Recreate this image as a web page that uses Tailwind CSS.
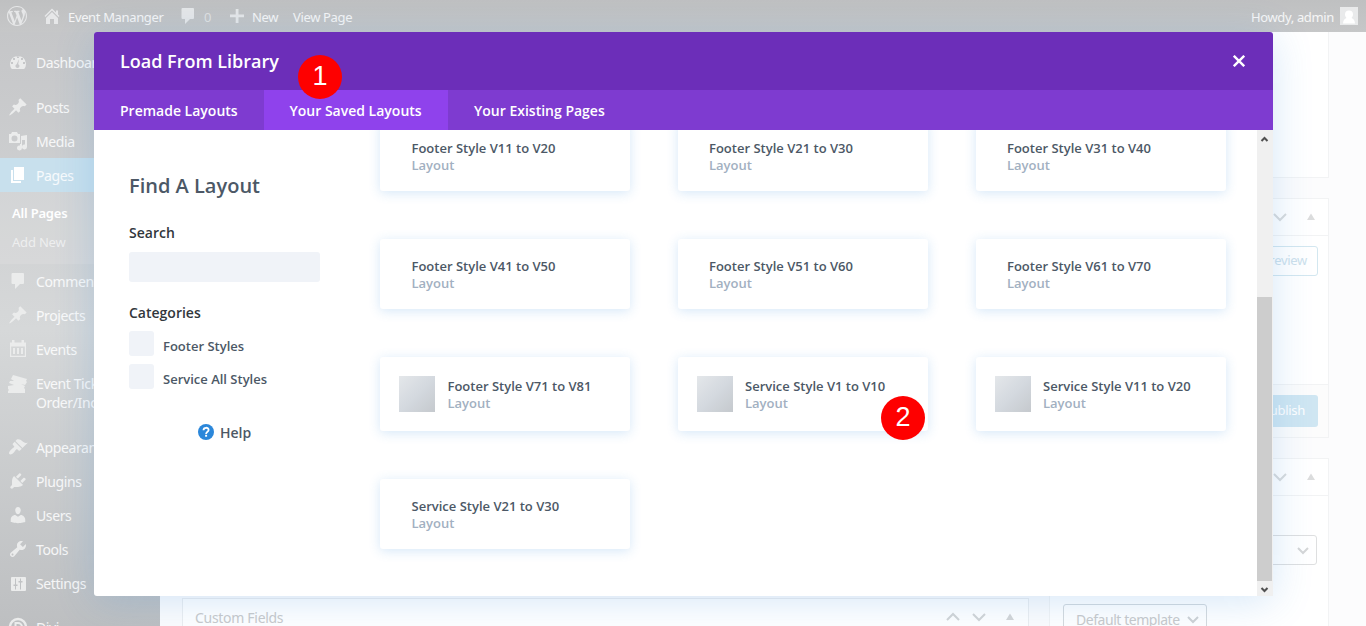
<!DOCTYPE html>
<html lang="en">
<head>
<meta charset="utf-8">
<title>Edit Page</title>
<script src="https://cdn.jsdelivr.net/npm/@tailwindcss/browser@4"></script>
</head>
<body class="relative h-[626px] w-[1366px] overflow-hidden bg-[#fcfcfd] font-['Noto_Sans',sans-serif]">

<!-- Admin bar -->
<header class="flex h-8 items-center bg-linear-to-b from-[#bfc0c1] to-[#c6c7c8] text-[13px] tracking-[-0.35px] whitespace-nowrap text-white/85 [&>span]:pt-[3px]">
  <svg class="ml-[7px] size-5 fill-[#e6e7e8]" viewBox="0 0 20 20"><path d="M20 10c0-5.51-4.49-10-10-10C4.480 0 0 4.490 0 10c0 5.520 4.480 10 10 10 5.510 0 10-4.480 10-10zM7.780 15.370L4.370 6.220c.55-.02 1.170-.08 1.170-.08.5-.06.44-1.130-.06-1.110 0 0-1.450.11-2.370.11-.18 0-.37 0-.58-.01C4.120 2.690 6.870 1.110 10 1.110c2.330 0 4.450.87 6.050 2.340-.68-.11-1.650.39-1.650 1.580 0 .74.45 1.360.9 2.100.35.61.55 1.360.55 2.460 0 1.490-1.400 5-1.400 5l-3.030-8.370c.54-.02.82-.17.82-.17.5-.05.44-1.250-.06-1.220 0 0-1.440.12-2.380.12-.87 0-2.330-.12-2.330-.12-.5-.03-.56 1.200-.06 1.220l.92.08 1.260 3.410zM17.410 10c.24-.64.74-1.870.43-4.250.7 1.290 1.050 2.710 1.050 4.250 0 3.290-1.730 6.240-4.400 7.780.97-2.590 1.940-5.200 2.920-7.780zM6.100 18.090C3.120 16.650 1.110 13.530 1.110 10c0-1.300.23-2.480.72-3.590C3.250 10.300 4.670 14.200 6.100 18.090zm4.030-6.630l2.580 6.980c-.86.29-1.760.45-2.710.45-.79 0-1.570-.11-2.290-.33.81-2.380 1.620-4.740 2.420-7.100z"/></svg>
  <svg class="ml-[15px] size-5 fill-[#e6e7e8]" viewBox="0 0 20 20"><path d="M16 8.500l1.530 1.530-1.060 1.060L10 4.600l-6.470 6.490-1.060-1.060L10 2.500l4 4v-2h2v4zm-6-2.460l6 5.990V18H12v-5H8v5H4v-5.970z"/></svg>
  <span class="ml-[6px] w-[95px]">Event Mananger</span>
  <svg class="ml-[15px] size-5 fill-[#e6e7e8]" viewBox="0 0 20 20"><path d="M4.500 2h10.500q1 0 1 1v9q0 1-1 1h-3l-5 5v-5H4.500q-1 0-1-1V3q0-1 1-1z"/></svg>
  <span class="ml-[6px] w-[8px] text-white/50">0</span>
  <svg class="ml-[15px] size-5 fill-[#e6e7e8]" viewBox="0 0 20 20"><path d="M17 8.500v2.700h-5.500V17H8.700v-5.800H3V8.500h5.700V3h2.800v5.500z"/></svg>
  <span class="ml-[5px] w-[26px]">New</span>
  <span class="ml-[15px]">View Page</span>
  <span class="ml-auto">Howdy, admin</span>
  <svg class="mr-2 ml-[6px] size-[18px]" viewBox="0 0 18 18"><path fill="#e9eaeb" d="M0 0h18v18H0z"/><path fill="#fff" d="M9 3.500a4 4 0 0 1 4 4c0 1.500-.8 2.800-1.500 3.500 2 .7 3.200 2 3.500 5.500H3c.3-3.500 1.500-4.800 3.500-5.500C5.800 10.300 5 9 5 7.500a4 4 0 0 1 4-4z"/></svg>
</header>

<div class="flex h-[594px]">
  <!-- Admin menu -->
  <nav class="flex h-[594px] w-40 shrink-0 flex-col overflow-hidden bg-linear-to-b from-[#c5c6c8] via-[#d6d8d9] via-50% to-[#bdbfc1] pt-[13px] text-[14px] leading-[19px] tracking-[-0.4px] text-white/85 [&>*]:shrink-0">
    <div class="flex h-[34px] items-center gap-2 pl-2"><svg class="size-5 fill-[#ebecec]" viewBox="0 0 20 20"><path fill-rule="evenodd" d="M3.800 17h12.400A8 8 0 1 0 3.800 17zM9 4h2v2H9zM5 6h2v2H5zm8 0h2v2h-2zM3 10h2v2H3zm12 0h2v2h-2zM11 7l-.8 5.200a2 2 0 1 1-1.500 0z"/></svg>Dashboard</div>
    <div class="mt-[11px] flex h-[34px] items-center gap-2 pl-2"><svg class="size-5 fill-[#ebecec]" viewBox="0 0 20 20"><path d="M10.440 3.020l1.820-1.820 6.360 6.350-1.830 1.820c-1.050-.68-2.480-.57-3.410.36l-.75.75c-.92.930-1.040 2.350-.35 3.410l-1.830 1.820-2.410-2.410-2.800 2.790c-.42.420-3.380 2.710-3.800 2.290s1.860-3.390 2.280-3.810l2.790-2.790L4.100 9.360l1.830-1.820c1.050.69 2.480.57 3.400-.36l.75-.75c.93-.92 1.050-2.350.36-3.410z"/></svg>Posts</div>
    <div class="flex h-[34px] items-center gap-2 pl-2"><svg class="size-5 fill-[#ebecec]" viewBox="0 0 20 20"><path fill-rule="evenodd" d="M1 3h2l1-2h5l1 2h2v9H1zm5.500 1.500a3 3 0 1 0 0 6 3 3 0 0 0 0-6zM13 5l6-1v12a2.500 2.500 0 1 1-2-2.500V9h-3v8a2.500 2.500 0 1 1-2-2.500V13h1z"/></svg>Media</div>
    <div class="flex h-[34px] items-center gap-2 bg-[#c8e0ed] pl-2"><svg class="size-5 fill-white" viewBox="0 0 20 20"><path d="M6 15V2h10v13zm-1 1h8v2H3V5h2z"/></svg>Pages</div>
    <div class="flex h-[72px] flex-col bg-white/10 py-[7px] pl-3 text-[13px] tracking-[-0.2px]">
      <span class="h-[29px] leading-[29px] font-semibold text-white">All Pages</span>
      <span class="h-[29px] leading-[29px] text-white/60">Add New</span>
    </div>
    <div class="flex h-[34px] items-center gap-2 pl-2"><svg class="size-5 fill-[#ebecec]" viewBox="0 0 20 20"><path d="M4.500 2h10.500q1 0 1 1v9q0 1-1 1h-3l-5 5v-5H4.500q-1 0-1-1V3q0-1 1-1z"/></svg>Comments</div>
    <div class="flex h-[34px] items-center gap-2 pl-2"><svg class="size-5 fill-[#ebecec]" viewBox="0 0 20 20"><path d="M10.440 3.020l1.820-1.820 6.360 6.350-1.830 1.820c-1.050-.68-2.480-.57-3.410.36l-.75.75c-.92.930-1.040 2.350-.35 3.410l-1.830 1.820-2.410-2.410-2.800 2.790c-.42.420-3.380 2.710-3.800 2.290s1.860-3.390 2.280-3.810l2.790-2.790L4.100 9.360l1.830-1.820c1.050.69 2.480.57 3.400-.36l.75-.75c.93-.92 1.050-2.350.36-3.410z"/></svg>Projects</div>
    <div class="flex h-[34px] items-center gap-2 pl-2"><svg class="size-5 fill-[#ebecec]" viewBox="0 0 20 20"><path fill-rule="evenodd" d="M2 3.500h2V1h2.500v2.500h7V1H16v2.500h2V18H2zM3.200 7.500v9.300h13.600V7.500zM5 9h2v6H5zm4 0h2v6H9zm4 0h2v6h-2z"/></svg>Events</div>
    <div class="flex h-[53px] items-start gap-2 pt-2 pl-2"><svg class="size-5 shrink-0 fill-[#ebecec]" viewBox="0 0 20 20"><path d="M5 1l14 4-1 2 1 1-2 3-4-1 4 2-1 2 1 1v4H0v-2l1-1-1-1v-3l6-1-5-2 1-2 4 0-3-2z"/></svg><span class="whitespace-nowrap">Event Tickets<br>Order/Include</span></div>
    <div class="mt-[11px] flex h-[34px] items-center gap-2 pl-2"><svg class="size-5 fill-[#ebecec]" viewBox="0 0 20 20"><path d="M14.480 11.060L7.410 3.990l1.500-1.500c.5-.56 2.300-.47 3.510.32 1.210.8 1.430 1.280 2.910 2.100 1.180.64 2.450 1.260 4.450.85zm-.71.710L6.700 4.700 4.930 6.470c-.39.39-.39 1.020 0 1.410l1.060 1.060c.39.39.39 1.030 0 1.420-.6.600-1.430 1.110-2.210 1.690-.35.260-.7.530-1.010.84C1.430 14.230.4 16.080 1.400 17.070c.99 1 2.840-.03 4.180-1.360.31-.31.58-.66.850-1.020.57-.78 1.080-1.610 1.690-2.210.39-.39 1.020-.39 1.410 0l1.060 1.060c.39.39 1.020.39 1.410 0z"/></svg>Appearance</div>
    <div class="flex h-[34px] items-center gap-2 pl-2"><svg class="size-5 fill-[#ebecec]" viewBox="0 0 20 20"><path d="M13.110 4.360L9.870 7.600 8 5.730l3.240-3.240c.35-.34 1.050-.2 1.560.32.520.51.660 1.210.310 1.550zm-8 1.770l.91-1.120 9.010 9.010-1.190.84c-.71.710-2.630 1.160-3.820 1.160H6.140L4.900 17.260c-.59.59-1.540.59-2.120 0-.59-.58-.59-1.530 0-2.120l1.240-1.240v-3.880c0-1.130.4-3.190 1.090-3.890zm7.260 3.970l3.240-3.240c.34-.35 1.040-.21 1.550.31.520.51.660 1.210.31 1.550l-3.240 3.250z"/></svg>Plugins</div>
    <div class="flex h-[34px] items-center gap-2 pl-2"><svg class="size-5 fill-[#ebecec]" viewBox="0 0 20 20"><path d="M10 9.250c-2.270 0-2.730-3.440-2.730-3.440C7 4.020 7.820 2 9.970 2c2.160 0 2.980 2.020 2.710 3.810 0 0-.41 3.440-2.680 3.440zm0 2.570L12.720 10c2.390 0 4.520 2.330 4.520 4.530v2.490s-3.650 1.130-7.240 1.130c-3.650 0-7.240-1.130-7.240-1.130v-2.490c0-2.250 1.940-4.480 4.470-4.480z"/></svg>Users</div>
    <div class="flex h-[34px] items-center gap-2 pl-2"><svg class="size-5 fill-[#ebecec]" viewBox="0 0 20 20"><path d="M16.680 9.770c-1.340 1.340-3.300 1.670-4.950.99l-5.410 6.520c-.99.990-2.590.990-3.580 0s-.99-2.590 0-3.570l6.520-5.420c-.68-1.650-.35-3.610.99-4.950 1.280-1.280 3.120-1.620 4.720-1.060l-2.890 2.890 2.820 2.820 2.860-2.870c.53 1.580.180 3.390-1.080 4.650zM3.810 16.210c.4.390 1.040.39 1.430 0 .4-.4.400-1.040 0-1.430-.39-.4-1.030-.4-1.430 0-.39.39-.39 1.030 0 1.430z"/></svg>Tools</div>
    <div class="flex h-[35px] items-center gap-2 pl-2"><svg class="size-5 fill-[#ebecec]" viewBox="0 0 20 20"><path fill-rule="evenodd" d="M18 16V4q0-1-1-1H4Q3 3 3 4v12q0 1 1 1h13q1 0 1-1zM8 10.500h1.500V12H8v3.500H7V12H5.500v-1.500H7V4.500h1zM13 7h1.500v1.500H13v7h-1v-7h-1.500V7H12V4.500h1z"/></svg>Settings</div>
    <div class="mt-[9px] flex h-[34px] items-center gap-2 pl-2"><svg class="size-5" viewBox="0 0 20 20"><circle cx="10" cy="10" r="8" fill="none" stroke="#ebecec" stroke-width="2.400"/><path fill="none" stroke="#ebecec" stroke-width="2" d="M7.500 6v8H10a4 4 0 0 0 0-8z"/></svg>Divi</div>
  </nav>

  <!-- Editor behind the dialog -->
  <main class="flex h-[594px] min-w-0 grow gap-5 overflow-hidden pl-[22px] tracking-[-0.3px] text-[#c9cacb]">
    <section class="flex w-[847px] flex-col [&>*]:shrink-0">
      <div class="mt-[566px] flex h-[38px] items-center border border-[#eceef0] bg-white pr-[11px] pl-3 text-[14px]">
        <span class="grow">Custom Fields</span>
        <svg class="h-5 w-[76px]" viewBox="0 0 76 20" fill="none" stroke="#d3d5d6" stroke-width="2"><path d="M6 13l6-6 6 6M32 7l6 6 6-6"/><path fill="#d5d6d7" stroke="none" d="M65 13l4-6.500 4 6.500z"/></svg>
      </div>
    </section>
    <aside class="flex w-[280px] flex-col [&>*]:shrink-0">
      <div class="h-[146px] border border-t-0 border-[#f2f3f4] bg-white"></div>
      <div class="mt-5 flex h-[240px] flex-col border border-[#f2f3f4] bg-white">
        <div class="flex h-[37px] shrink-0 items-center justify-end border-b border-[#f2f3f4] pr-[10px]">
          <svg class="h-5 w-[50px]" viewBox="0 0 50 20" fill="none" stroke="#d9dbdc" stroke-width="2"><path d="M6 7l6 6 6-6"/><path fill="#dcdddd" stroke="none" d="M39 13l4-6.500 4 6.500z"/></svg>
        </div>
        <div class="mt-[10px] mr-[10px] flex h-[30px] w-[82px] shrink-0 items-center justify-end self-end rounded-[3px] border border-[#d3e7f0] pr-[10px] text-[13px] text-[#cde1ec]">Preview</div>
        <div class="mt-auto flex h-[53px] shrink-0 items-center justify-end border-t border-[#f2f3f4] bg-[#fcfcfc] pr-[10px]"><span class="flex h-8 w-[76px] items-center justify-end rounded-[3px] bg-[#cfe6f2] pr-[13px] text-[13px] text-white">Publish</span></div>
      </div>
      <div class="mt-5 flex h-[200px] flex-col border border-[#f2f3f4] bg-white">
        <div class="flex h-[37px] shrink-0 items-center justify-end border-b border-[#f2f3f4] pr-[10px]">
          <svg class="h-5 w-[50px]" viewBox="0 0 50 20" fill="none" stroke="#d9dbdc" stroke-width="2"><path d="M6 7l6 6 6-6"/><path fill="#dcdddd" stroke="none" d="M39 13l4-6.500 4 6.500z"/></svg>
        </div>
        <div class="mt-[39px] mr-[11px] flex h-[30px] w-[240px] shrink-0 items-center justify-end self-end rounded-[3px] border border-[#dedfe0] pr-[7px]"><svg class="size-3" viewBox="0 0 12 12" fill="none" stroke="#d5d6d7" stroke-width="2"><path d="M1 4l5 5 5-5"/></svg></div>
        <div class="mt-[39px] ml-[13px] flex h-[30px] w-[144px] shrink-0 items-center justify-between rounded-[3px] border border-[#d5dadd] pr-[7px] pl-3 text-[14px] tracking-[-0.45px]"><span class="whitespace-nowrap">Default template</span><svg class="size-3" viewBox="0 0 12 12" fill="none" stroke="#cfd2d4" stroke-width="2"><path d="M1 4l5 5 5-5"/></svg></div>
      </div>
    </aside>
  </main>
</div>

<!-- Library dialog -->
<div class="absolute top-8 left-[94px] flex h-[564px] w-[1179px] flex-col rounded-[3px] bg-white font-['Open_Sans',sans-serif] font-semibold text-[#4c5866] shadow-[0_5px_40px_rgba(43,135,218,0.2)]">
  <div class="flex h-[58px] items-center justify-between rounded-t-[3px] bg-[#6c2eb9] pr-7 pl-[26px] text-[18px] text-white">
    Load From Library
    <svg class="size-3" viewBox="0 0 12 12" fill="none" stroke="#fff" stroke-width="2.400"><path d="M.8.8l10.400 10.400M11.200.8L.8 11.200"/></svg>
  </div>
  <div class="flex h-10 items-center bg-[#7e3bd0] text-[14px] whitespace-nowrap text-white">
    <span class="flex h-10 w-[170px] items-center pt-px pl-[26px]">Premade Layouts</span>
    <span class="flex h-10 w-[184px] items-center bg-[#8f42ec] pt-px pl-[25.500px]">Your Saved Layouts</span>
    <span class="flex h-10 items-center pt-px pl-[26px]">Your Existing Pages</span>
  </div>
  <div class="flex h-[466px]">
    <div class="flex w-[275px] shrink-0 flex-col pt-[41px] pl-[35px]">
      <h2 class="h-[30px] text-[20px] leading-[30px]">Find A Layout</h2>
      <div class="mt-[22px] h-5 text-[14px] leading-5 text-[#32373c]">Search</div>
      <div class="mt-[9px] h-[30px] w-[191px] rounded-[3px] bg-[#f0f3f8]"></div>
      <div class="mt-[21px] h-5 text-[14px] leading-5 text-[#32373c]">Categories</div>
      <div class="mt-2 flex h-[25px] gap-[9px] text-[13px]"><span class="size-[25px] rounded-[3px] bg-[#f0f3f8]"></span><span class="pt-[5px] leading-5">Footer Styles</span></div>
      <div class="mt-2 flex h-[25px] gap-[9px] text-[13px]"><span class="size-[25px] rounded-[3px] bg-[#f0f3f8]"></span><span class="pt-[5px] leading-5">Service All Styles</span></div>
      <div class="mt-[34px] flex h-5 items-center gap-[6px] pl-[69px] text-[14px] leading-5"><svg class="-mt-0.5 size-4" viewBox="0 0 16 16"><circle cx="8" cy="8" r="8" fill="#2b87da"/><path fill="none" stroke="#fff" stroke-width="1.800" d="M5.500 6.200C5.500 3 10.600 3 10.600 6c0 1.800-2.500 1.800-2.500 4"/><path fill="#fff" d="M7.100 10.800h2v1.900h-2z"/></svg>Help</div>
    </div>
    <div class="grid h-[466px] w-[888px] grid-cols-[repeat(3,250px)] content-start gap-x-12 overflow-hidden pl-[11px] text-[13px] leading-[17px] whitespace-nowrap">
      <div class="mt-[-9px] h-[70px] rounded-[3px] pt-[19px] pl-[31.500px] shadow-[0_2px_12px_rgba(43,135,218,0.2)]">Footer Style V11 to V20<div class="text-[#a2b0c1]">Layout</div></div>
      <div class="mt-[-9px] h-[70px] rounded-[3px] pt-[19px] pl-[31px] shadow-[0_2px_12px_rgba(43,135,218,0.2)]">Footer Style V21 to V30<div class="text-[#a2b0c1]">Layout</div></div>
      <div class="mt-[-9px] h-[70px] rounded-[3px] pt-[19px] pl-[31px] shadow-[0_2px_12px_rgba(43,135,218,0.2)]">Footer Style V31 to V40<div class="text-[#a2b0c1]">Layout</div></div>
      <div class="mt-12 h-[70px] rounded-[3px] pt-[19px] pl-[31.500px] shadow-[0_2px_12px_rgba(43,135,218,0.2)]">Footer Style V41 to V50<div class="text-[#a2b0c1]">Layout</div></div>
      <div class="mt-12 h-[70px] rounded-[3px] pt-[19px] pl-[31px] shadow-[0_2px_12px_rgba(43,135,218,0.2)]">Footer Style V51 to V60<div class="text-[#a2b0c1]">Layout</div></div>
      <div class="mt-12 h-[70px] rounded-[3px] pt-[19px] pl-[31px] shadow-[0_2px_12px_rgba(43,135,218,0.2)]">Footer Style V61 to V70<div class="text-[#a2b0c1]">Layout</div></div>
      <div class="mt-12 flex h-[74px] items-center gap-[12.500px] rounded-[3px] pl-[19px] shadow-[0_2px_12px_rgba(43,135,218,0.2)]"><span class="size-9 bg-linear-to-br from-[#e4e7ea] via-[#d4d9df] to-[#c5c9cd]"></span><div class="pt-px">Footer Style V71 to V81<div class="text-[#a2b0c1]">Layout</div></div></div>
      <div class="mt-12 flex h-[74px] items-center gap-3 rounded-[3px] pl-[19px] shadow-[0_2px_12px_rgba(43,135,218,0.2)]"><span class="size-9 bg-linear-to-br from-[#e4e7ea] via-[#d4d9df] to-[#c5c9cd]"></span><div class="pt-px">Service Style V1 to V10<div class="text-[#a2b0c1]">Layout</div></div></div>
      <div class="mt-12 flex h-[74px] items-center gap-3 rounded-[3px] pl-[19px] shadow-[0_2px_12px_rgba(43,135,218,0.2)]"><span class="size-9 bg-linear-to-br from-[#e4e7ea] via-[#d4d9df] to-[#c5c9cd]"></span><div class="pt-px">Service Style V11 to V20<div class="text-[#a2b0c1]">Layout</div></div></div>
      <div class="mt-12 h-[70px] rounded-[3px] pt-[19px] pl-[31.500px] shadow-[0_2px_12px_rgba(43,135,218,0.2)]">Service Style V21 to V30<div class="text-[#a2b0c1]">Layout</div></div>
    </div>
    <div class="flex w-4 flex-col bg-[#f0f0f0]">
      <svg class="h-[15px] w-[15px]" viewBox="0 0 15 15" fill="none" stroke="#505050" stroke-width="2"><path d="M4.500 11l3-3 3 3"/></svg>
      <div class="mt-[152px] h-[284px] w-[15px] bg-[#cdcdcd]"></div>
      <svg class="h-[15px] w-[15px]" viewBox="0 0 15 15" fill="none" stroke="#505050" stroke-width="2"><path d="M4.500 7l3 3 3-3"/></svg>
    </div>
  </div>
</div>

<!-- Step markers -->
<span class="absolute top-[55px] left-[298px] flex size-11 items-center justify-center rounded-full bg-[#fe0000] pb-0.5 font-['Liberation_Sans',sans-serif] text-[27px] text-white">1</span>
<span class="absolute top-[396px] left-[881px] flex size-11 items-center justify-center rounded-full bg-[#fe0000] pb-0.5 font-['Liberation_Sans',sans-serif] text-[27px] text-white">2</span>
</body>
</html>
